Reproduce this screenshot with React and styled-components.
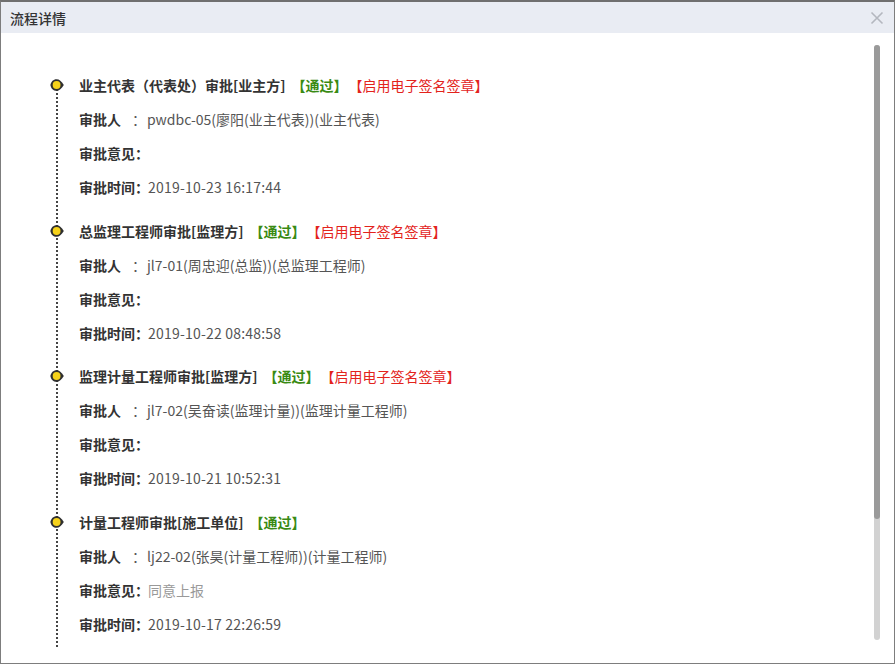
import React from "react";
import styled, { createGlobalStyle } from "styled-components";

const Global = createGlobalStyle`
  html, body { margin: 0; padding: 0; background: #ffffff; }
  body { font-family: "Noto Sans CJK SC", "Microsoft YaHei", sans-serif; }
  * { box-sizing: border-box; }
`;

const Dialog = styled.div`
  width: 895px;
  height: 664px;
  border: 1px solid #7d7d7d;
  border-top: 2px solid #6f6f6f;
  background: #fff;
  display: flex;
  flex-direction: column;
`;

const Header = styled.div`
  height: 31px;
  flex: none;
  background: #e9ecf3;
  display: flex;
  align-items: center;
  justify-content: space-between;
  padding: 0 9px 0 9px;
`;

const Title = styled.div`
  font-size: 14px;
  color: #333;
  font-weight: 500;
`;

const Close = styled.button`
  border: 0;
  background: transparent;
  padding: 0;
  width: 16px;
  height: 16px;
  display: flex;
  align-items: center;
  justify-content: center;
  cursor: pointer;
`;

const BodyWrap = styled.div`
  flex: none;
  height: 615px;
  display: flex;
  padding-right: 14px;
`;

const Scroll = styled.div`
  flex: 1;
  height: 100%;
  overflow: hidden;
`;

const ScrollTrack = styled.div`
  flex: none;
  width: 6px;
  margin: 12px 0 8px 0;
  border-radius: 3px;
  background: #d2d2d2;
  display: flex;
  flex-direction: column;
`;

const ScrollThumb = styled.div`
  flex: none;
  border-radius: 3px;
  background: #9a9a9a;
`;

const List = styled.div`
  padding: 35px 0 153px 55px;
`;

const Item = styled.div`
  position: relative;
  padding: 0 0 9.5px 23px;
  &::before {
    content: "";
    position: absolute;
    left: 0;
    top: 17px;
    bottom: -17px;
    border-left: 2px dotted #444;
  }
`;

const Marker = styled.svg`
  position: absolute;
  left: -7px;
  top: 10px;
  width: 16px;
  height: 14px;
  z-index: 1;
`;

const Row = styled.div`
  height: 34px;
  line-height: 34px;
  font-size: 14px;
  color: #555;
  white-space: nowrap;
`;

const Head = styled.span`
  font-weight: 700;
  color: #333;
`;

const Pass = styled.span`
  margin-left: 6px;
  font-weight: 700;
  color: #3a8a13;
`;

const Sign = styled.span`
  margin-left: 8px;
  color: #e3231c;
`;

const Label = styled.span`
  font-weight: 700;
  color: #333;
`;

const Colon = styled.span`
  margin-left: ${(p) => (p.$gap ? "11px" : "0")};
  margin-right: ${(p) => (p.$gap ? "1px" : "-1px")};
  font-weight: ${(p) => (p.$gap ? 400 : 700)};
  color: ${(p) => (p.$gap ? "#555" : "#333")};
`;

const Value = styled.span`
  color: ${(p) => (p.$muted ? "#999" : "#555")};
  letter-spacing: ${(p) => (p.$num ? "0.2px" : "0")};
`;

const steps = [
  {
    title: "业主代表（代表处）审批[业主方]",
    sign: true,
    person: "pwdbc-05(廖阳(业主代表))(业主代表)",
    opinion: "",
    time: "2019-10-23 16:17:44",
  },
  {
    title: "总监理工程师审批[监理方]",
    sign: true,
    person: "jl7-01(周忠迎(总监))(总监理工程师)",
    opinion: "",
    time: "2019-10-22 08:48:58",
  },
  {
    title: "监理计量工程师审批[监理方]",
    sign: true,
    person: "jl7-02(吴奋读(监理计量))(监理计量工程师)",
    opinion: "",
    time: "2019-10-21 10:52:31",
  },
  {
    title: "计量工程师审批[施工单位]",
    sign: false,
    person: "lj22-02(张昊(计量工程师))(计量工程师)",
    opinion: "同意上报",
    time: "2019-10-17 22:26:59",
  },
];

function Dot() {
  return (
    <Marker viewBox="0 0 16 14">
      <path
        d="M1.4 7 C2 3.4 4.4 1.2 7.5 1.2 C10.3 1.2 12.5 3.2 14.8 7 C12.5 10.8 10.3 12.8 7.5 12.8 C4.4 12.8 2 10.6 1.4 7 Z"
        fill="#2f2f2f"
      />
      <circle cx="7.6" cy="7" r="3.9" fill="#f6d21a" />
    </Marker>
  );
}

export default function App() {
  const visible = 615;
  const content = 772;
  const track = 595;
  const thumb = Math.round((track * visible) / content);
  return (
    <>
      <Global />
      <Dialog>
        <Header>
          <Title>流程详情</Title>
          <Close aria-label="关闭">
            <svg width="14" height="14" viewBox="0 0 14 14">
              <path d="M1.5 1.5 L12.5 12.5 M12.5 1.5 L1.5 12.5" stroke="#b4b7bf" strokeWidth="1.6" />
            </svg>
          </Close>
        </Header>
        <BodyWrap>
          <Scroll>
            <List>
              {steps.map((s, i) => (
                <Item key={i}>
                  <Dot />
                  <Row>
                    <Head>{s.title}</Head>
                    <Pass>【通过】</Pass>
                    {s.sign && <Sign>【启用电子签名签章】</Sign>}
                  </Row>
                  <Row>
                    <Label>审批人</Label>
                    <Colon $gap>：</Colon>
                    <Value>{s.person}</Value>
                  </Row>
                  <Row>
                    <Label>审批意见</Label>
                    <Colon>：</Colon>
                    <Value $muted>{s.opinion}</Value>
                  </Row>
                  <Row>
                    <Label>审批时间</Label>
                    <Colon>：</Colon>
                    <Value $num>{s.time}</Value>
                  </Row>
                </Item>
              ))}
            </List>
          </Scroll>
          <ScrollTrack>
            <ScrollThumb style={{ height: thumb }} />
          </ScrollTrack>
        </BodyWrap>
      </Dialog>
    </>
  );
}
